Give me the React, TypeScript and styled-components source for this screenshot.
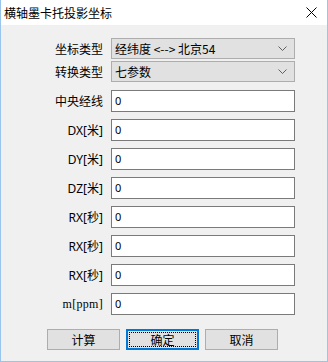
import React from "react";
import styled, { createGlobalStyle } from "styled-components";

const Global = createGlobalStyle`
  html, body { margin: 0; padding: 0; background: #ffffff; }
  body { font-family: "Noto Sans CJK SC", "Noto Sans", sans-serif; }
  * { box-sizing: border-box; }
`;

const Window = styled.div`
  width: 328px;
  height: 362px;
  display: flex;
  flex-direction: column;
  border: 1px solid #99c4ec;
  border-top: none;
  background: #f0f0f0;
`;

const TitleBar = styled.div`
  height: 25px;
  flex: none;
  background: #ffffff;
  display: flex;
  align-items: center;
  justify-content: space-between;
  padding: 0 10px 0 3px;
`;

const Title = styled.span`
  font-size: 12px;
  line-height: 14px;
  color: #000;
  padding-top: 1px;
`;

const Body = styled.div`
  flex: 1;
  display: flex;
  flex-direction: column;
  padding: 13px 32px 0 0;
`;

const Grid = styled.div<{ $gap: number; $top?: number }>`
  display: grid;
  grid-template-columns: 1fr 184px;
  column-gap: 8px;
  row-gap: ${(p) => p.$gap}px;
  margin-top: ${(p) => p.$top ?? 0}px;
  align-items: center;
`;

const Label = styled.label<{ $serif?: boolean }>`
  justify-self: end;
  font-family: ${(p) =>
    p.$serif
      ? '"Liberation Serif", "Noto Sans CJK SC", serif'
      : '"Noto Sans", "Noto Sans CJK SC", sans-serif'};
  font-size: 12px;
  letter-spacing: ${(p) => (p.$serif ? "0.3px" : "0")};
  color: #000;
  white-space: nowrap;
`;

const Combo = styled.div`
  height: 21px;
  border: 1px solid #adadad;
  background: #e1e1e1;
  display: flex;
  align-items: center;
  justify-content: space-between;
  padding: 0 7px 0 3px;
  font-size: 12px;
  color: #000;
`;

const TextBox = styled.div`
  height: 22px;
  border: 1px solid #7a7a7a;
  background: #ffffff;
  display: flex;
  align-items: center;
  padding: 0 3px 2px;
  font-family: "Noto Sans", sans-serif;
  font-size: 11px;
  color: #000;
`;

const ButtonRow = styled.div`
  display: flex;
  gap: 6px;
  margin-top: 14px;
  padding-left: 46px;
`;

const Button = styled.button<{ $default?: boolean }>`
  position: relative;
  width: 73px;
  height: 21px;
  border: 1px solid ${(p) => (p.$default ? "#0078d7" : "#adadad")};
  box-shadow: ${(p) => (p.$default ? "inset 0 0 0 1px #0078d7" : "none")};
  background: #e1e1e1;
  font-family: "Noto Sans CJK SC", sans-serif;
  font-size: 12px;
  color: #000;
  padding: 0;
  display: flex;
  align-items: center;
  justify-content: center;
  &::after {
    content: "";
    display: ${(p) => (p.$default ? "block" : "none")};
    position: absolute;
    inset: 2px;
    border: 1px dotted #000;
  }
`;

const Chevron = () => (
  <svg width="9" height="5" viewBox="0 0 9 5">
    <polyline points="0.5,0.5 4.5,4.5 8.5,0.5" fill="none" stroke="#606060" strokeWidth="1" />
  </svg>
);

const CloseIcon = () => (
  <svg width="11" height="11" viewBox="0 0 11 11">
    <path d="M0.5 0.5 L10.5 10.5 M10.5 0.5 L0.5 10.5" stroke="#000" strokeWidth="1" />
  </svg>
);

const fields: { label: string; serif?: boolean }[] = [
  { label: "中央经线" },
  { label: "DX[米]" },
  { label: "DY[米]" },
  { label: "DZ[米]" },
  { label: "RX[秒]" },
  { label: "RX[秒]" },
  { label: "RX[秒]" },
  { label: "m[ppm]", serif: true },
];

export default function App() {
  return (
    <>
      <Global />
      <Window>
        <TitleBar>
          <Title>横轴墨卡托投影坐标</Title>
          <CloseIcon />
        </TitleBar>
        <Body>
          <Grid $gap={2}>
            <Label>坐标类型</Label>
            <Combo>
              <span>经纬度 &lt;--&gt; 北京54</span>
              <Chevron />
            </Combo>
            <Label>转换类型</Label>
            <Combo>
              <span>七参数</span>
              <Chevron />
            </Combo>
          </Grid>
          <Grid $gap={7} $top={8}>
            {fields.map((f, i) => (
              <React.Fragment key={i}>
                <Label $serif={f.serif}>{f.label}</Label>
                <TextBox>0</TextBox>
              </React.Fragment>
            ))}
          </Grid>
          <ButtonRow>
            <Button>计算</Button>
            <Button $default>确定</Button>
            <Button>取消</Button>
          </ButtonRow>
        </Body>
      </Window>
    </>
  );
}
